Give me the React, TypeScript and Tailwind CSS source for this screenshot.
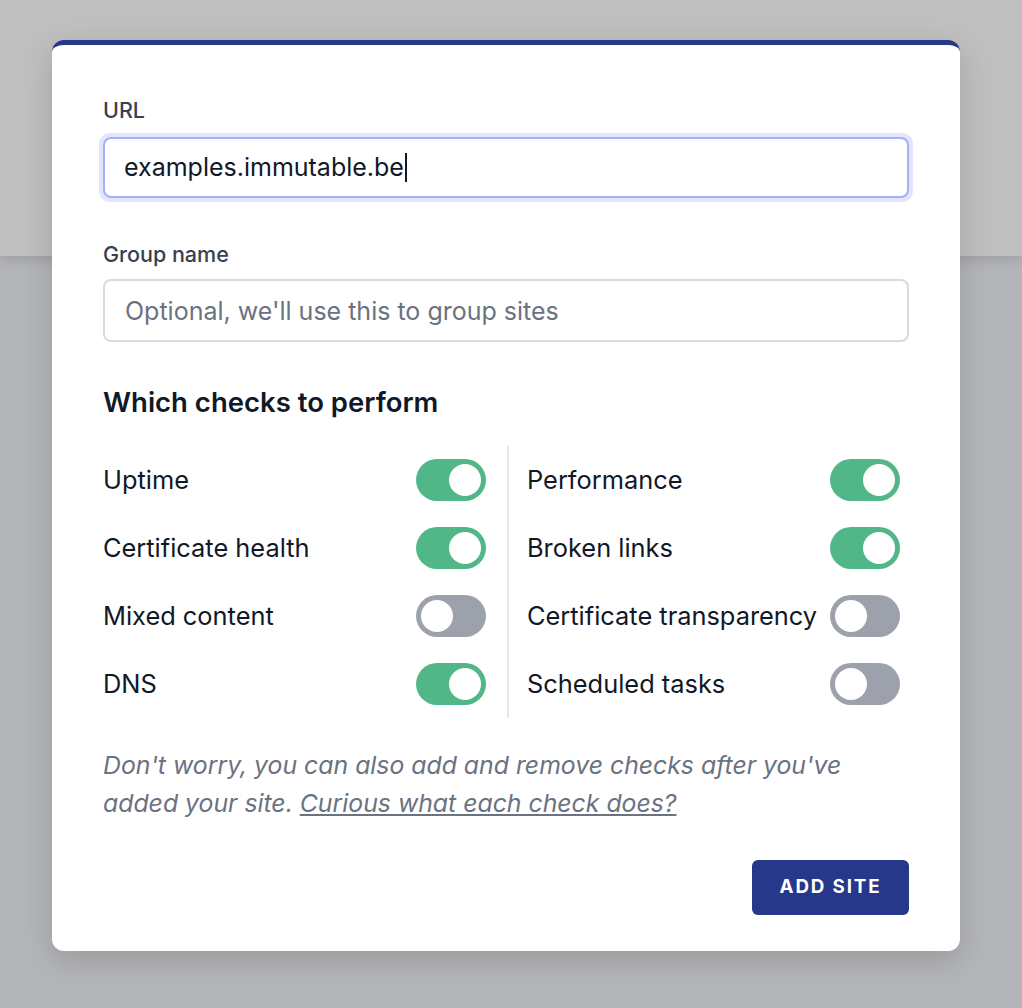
import { useState } from 'react';

type Check = { label: string; on: boolean };

const left: Check[] = [
  { label: 'Uptime', on: true },
  { label: 'Certificate health', on: true },
  { label: 'Mixed content', on: false },
  { label: 'DNS', on: true },
];

const right: Check[] = [
  { label: 'Performance', on: true },
  { label: 'Broken links', on: true },
  { label: 'Certificate transparency', on: false },
  { label: 'Scheduled tasks', on: false },
];

function Toggle({ on, onClick }: { on: boolean; onClick: () => void }) {
  return (
    <button
      type="button"
      onClick={onClick}
      className={`relative h-[42px] w-[70px] shrink-0 rounded-full transition-colors ${on ? 'bg-[#52b788]' : 'bg-[#9ca1ab]'}`}
    >
      <span
        className={`absolute top-[5px] h-[32px] w-[32px] rounded-full bg-white transition-all ${on ? 'left-[33px]' : 'left-[5px]'}`}
      />
    </button>
  );
}

function CheckColumn({ items }: { items: Check[] }) {
  const [state, setState] = useState(items.map(i => i.on));
  return (
    <div className="flex flex-col">
      {items.map((item, i) => (
        <div key={item.label} className="flex h-[68px] items-center justify-between">
          <span className="text-[25.4px] text-[#111827]">{item.label}</span>
          <Toggle on={state[i]} onClick={() => setState(s => s.map((v, j) => (j === i ? !v : v)))} />
        </div>
      ))}
    </div>
  );
}

export default function App() {
  return (
    <div className="relative min-h-[1008px] w-full overflow-hidden bg-[#b4b5b8]" style={{ fontFamily: 'Inter, "Noto Sans", sans-serif' }}>
      <div className="absolute inset-x-0 top-0 h-[256px] bg-[#bfbfbf] shadow-[0_4px_12px_rgba(0,0,0,0.12)]" />
      <div className="relative pl-[52px] pt-[40px]">
        <div className="w-[908px] rounded-[12px] border-t-[5px] border-[#26388a] bg-white px-[51px] pb-[36px] pt-[53px] shadow-[0_10px_30px_rgba(0,0,0,0.15)]">
          <label className="block text-[21.5px] font-medium leading-[24px] text-[#374151]">URL</label>
          <div className="-mx-[4px] mt-[11px] rounded-[11px] bg-[#e2e6fb] p-[4px]">
            <div className="flex h-[61px] items-center rounded-[8px] border-2 border-[#a5b0f8] bg-white px-[19px] text-[25px] text-[#111827]">
              examples.immutable.be<span className="ml-[1px] inline-block h-[29px] w-[2px] bg-[#111827]" />
            </div>
          </div>

          <label className="mt-[40px] block text-[21.5px] font-medium leading-[24px] text-[#374151]">Group name</label>
          <input
            className="mt-[13px] h-[63px] w-full rounded-[8px] border-2 border-[#d8dadf] px-[20px] text-[25px] text-[#111827] outline-none placeholder:text-[#6b7280]"
            placeholder="Optional, we'll use this to group sites"
          />

          <h2 className="mt-[43px] text-[27.5px] font-semibold leading-[34px] text-[#111827]">Which checks to perform</h2>

          <div className="mt-[27px] flex">
            <div className="w-[383px]">
              <CheckColumn items={left} />
            </div>
            <div className="ml-[21px] mr-[18px] w-[2px] bg-[#e5e7eb]" />
            <div className="w-[373px]">
              <CheckColumn items={right} />
            </div>
          </div>

          <p className="mt-[28px] max-w-[800px] text-[24.8px] italic leading-[38px] text-[#6b7280]">
            Don't worry, you can also add and remove checks after you've added your site.{' '}
            <a href="#" className="underline">Curious what each check does?</a>
          </p>

          <div className="mt-[38px] flex justify-end">
            <button
              type="button"
              className="h-[55px] w-[157px] rounded-[6px] bg-[#26388a] text-[18.75px] font-bold tracking-[0.1em] text-white"
            >
              ADD SITE
            </button>
          </div>
        </div>
      </div>
    </div>
  );
}
